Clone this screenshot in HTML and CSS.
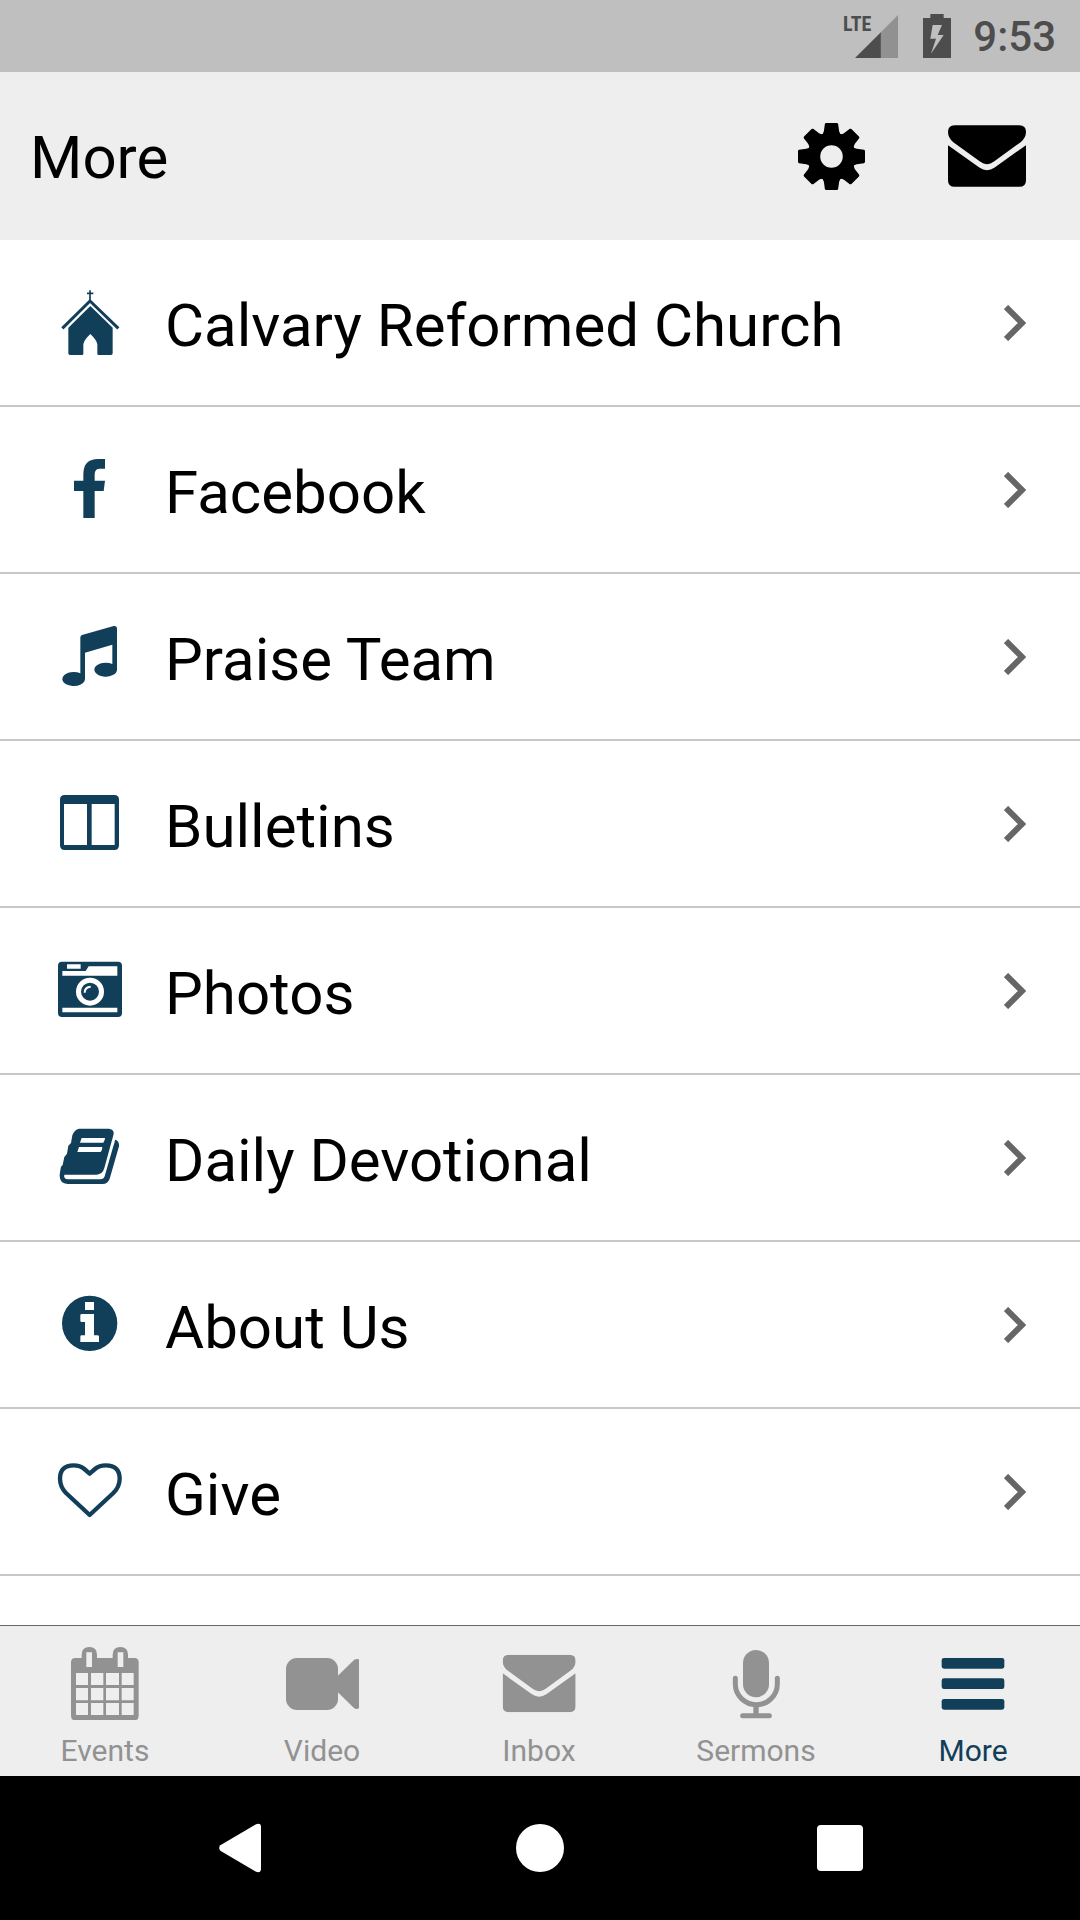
FILE: index.html
```html
<!DOCTYPE html>
<html lang="en">
<head>
<meta charset="utf-8">
<meta name="viewport" content="width=device-width, initial-scale=1">
<title>More</title>
<link rel="stylesheet" href="styles.css">
</head>
<body>
<svg class="defs" aria-hidden="true">
  <symbol id="mail" viewBox="504 375 234 185">
    <path d="M524 375H718Q738 375 738 395Q738 414 722 426L642 484Q621 500 600 484L520 426Q504 414 504 395Q504 375 524 375Z"/>
    <path d="M504 435L598 502Q621 518 644 502L738 435V540Q738 560 718 560H524Q504 560 504 540Z"/>
  </symbol>
  <symbol id="chevron" viewBox="0 0 22 36">
    <path d="M2 2L18 18L2 34" fill="none" stroke="currentColor" stroke-width="6"/>
  </symbol>
  <path id="tooth" d="M-34 -62Q-24 -68 -23 -76L-20 -98Q-19 -101 -16 -101H16Q19 -101 20 -98L23 -76Q24 -68 34 -62Z"/>
</svg>

<div class="status">
  <span class="lte">LTE</span>
  <svg class="signal" viewBox="226 43 128 128" aria-hidden="true"><path class="signal-off" d="M354 43V171H303V94Z"/><path d="M303 94V171H226Z"/></svg>
  <svg class="battery" viewBox="429 42 84 132" aria-hidden="true"><path fill-rule="evenodd" d="M451 42H491V54H513V174H429V54H451ZM458 75L451 116H468L453 161L491 105H473L486 75Z"/></svg>
  <time class="clock">9:53</time>
</div>

<header class="header">
  <h1 class="title">More</h1>
  <button class="action" type="button" aria-label="Settings">
    <svg class="gear" viewBox="-101 -101 202 202" aria-hidden="true">
      <circle r="53" fill="none" stroke="currentColor" stroke-width="38"/>
      <use href="#tooth" class="t0"/><use href="#tooth" transform="rotate(45)"/><use href="#tooth" transform="rotate(90)"/><use href="#tooth" transform="rotate(135)"/><use href="#tooth" transform="rotate(180)"/><use href="#tooth" transform="rotate(225)"/><use href="#tooth" transform="rotate(270)"/><use href="#tooth" transform="rotate(315)"/>
    </svg>
  </button>
  <button class="action" type="button" aria-label="Messages"><svg class="envelope" aria-hidden="true"><use href="#mail"/></svg></button>
</header>

<main class="content">
  <ul class="menu">
    <li><a class="row" href="#church">
      <svg class="icon" viewBox="165 120 210 255" aria-hidden="true">
        <path d="M270 151V182M261 160H280" fill="none" stroke="currentColor" stroke-width="5"/>
        <path d="M187 265L270 183L355 265" fill="none" stroke="currentColor" stroke-width="9"/>
        <path d="M271 198L338 263V340Q338 345 333 345H296Q292 345 292 341V313Q290 300 271 282Q252 300 250 313V341Q250 345 246 345H210Q205 345 205 340V263Z"/>
      </svg>
      <span class="label">Calvary Reformed Church</span><svg class="chevron" aria-hidden="true"><use href="#chevron"/></svg></a></li>
    <li><a class="row" href="#facebook">
      <svg class="icon" viewBox="165 621 210 255" aria-hidden="true">
        <path d="M250 834V753H222V722H250V702Q250 657 295 657H315V686H299Q284 686 284 703V722H315L311 753H284V834Z"/>
      </svg>
      <span class="label">Facebook</span><svg class="chevron" aria-hidden="true"><use href="#chevron"/></svg></a></li>
    <li><a class="row" href="#praise">
      <svg class="icon" viewBox="165 132 210 255" aria-hidden="true">
        <path d="M241 202Q241 197 246 195L341 168Q351 167 351 176V299A34 21 0 1 1 337 282V224L255 248V327A34 21 0 1 1 241 310Z"/>
      </svg>
      <span class="label">Praise Team</span><svg class="chevron" aria-hidden="true"><use href="#chevron"/></svg></a></li>
    <li><a class="row" href="#bulletins">
      <svg class="icon" viewBox="165 633 210 255" aria-hidden="true">
        <path fill-rule="evenodd" d="M194 675H343Q357 675 357 689V826Q357 840 343 840H194Q180 840 180 826V689Q180 675 194 675ZM192 702V825H261V702ZM275 702V825H344V702Z"/>
      </svg>
      <span class="label">Bulletins</span><svg class="chevron" aria-hidden="true"><use href="#chevron"/></svg></a></li>
    <li><a class="row" href="#photos">
      <svg class="icon" viewBox="165 144 210 255" aria-hidden="true">
        <path fill-rule="evenodd" d="M186 185H354Q366 185 366 197V339Q366 351 354 351H186Q174 351 174 339V197Q174 185 186 185ZM201 193V206H242V193ZM266 199L257 213H187V227H352V199ZM187 323V337H352V323ZM270 233A42 42 0 1 0 270 317A42 42 0 1 0 270 233ZM270 248A27 27 0 1 1 270 302A27 27 0 1 1 270 248Z"/>
        <path d="M254 278Q254 261 272 260" fill="none" stroke="#fff" stroke-width="6"/>
      </svg>
      <span class="label">Photos</span><svg class="chevron" aria-hidden="true"><use href="#chevron"/></svg></a></li>
    <li><a class="row" href="#devotional">
      <svg class="icon" viewBox="165 645 210 255" aria-hidden="true">
        <path fill-rule="evenodd" d="M237 686H327Q345 688 340 706L313 804Q308 823 290 824H193Q190 837 204 838H301Q311 838 314 829L341 735Q344 728 345 719Q358 721 357 739L329 836Q323 852 308 852H203Q179 850 179 827Q179 820 183 800L188 795L193 771L201 761L205 737L213 729L217 706Q224 688 237 686ZM245 714L240 728H310Q315 722 315 714ZM237 741L232 756H302Q307 750 307 741Z"/>
      </svg>
      <span class="label">Daily Devotional</span><svg class="chevron" aria-hidden="true"><use href="#chevron"/></svg></a></li>
    <li><a class="row" href="#about">
      <svg class="icon" viewBox="165 126 210 255" aria-hidden="true">
        <path fill-rule="evenodd" d="M269 167A83 83 0 1 0 269 333A83 83 0 1 0 269 167ZM255 186H282V210H255ZM245 222H282V286H292Q297 286 297 290V306H241V290Q241 286 245 286H255V246H245Q241 246 241 242V226Q241 222 245 222Z"/>
      </svg>
      <span class="label">About Us</span><svg class="chevron" aria-hidden="true"><use href="#chevron"/></svg></a></li>
    <li><a class="row" href="#give">
      <svg class="icon" viewBox="165 627 210 255" aria-hidden="true">
        <path d="M269 825L198 759Q180 740 180 716Q180 676 221 676Q240 676 253 687L269 701L285 687Q298 676 317 676Q359 676 359 716Q359 740 340 759Z" fill="none" stroke="currentColor" stroke-width="13" stroke-linejoin="round"/>
      </svg>
      <span class="label">Give</span><svg class="chevron" aria-hidden="true"><use href="#chevron"/></svg></a></li>
  </ul>
</main>

<nav class="tabs">
  <a class="tab" href="#events">
    <svg class="tab-icon" viewBox="195 90 240 240" aria-hidden="true">
      <path fill-rule="evenodd" d="M226 144H245V134Q245 111 268 111Q291 111 291 134V144H338V134Q338 111 361 111Q384 111 384 134V144H403Q416 144 416 157V317Q416 331 403 331H226Q213 331 213 317V157Q213 144 226 144ZM259 127V171H276V127ZM353 127V171H370V127ZM228 189V225H264V189ZM273 189V225H310V189ZM318 189V225H357V189ZM365 189V225H401V189ZM228 234V271H264V234ZM273 234V271H310V234ZM318 234V271H357V234ZM365 234V271H401V234ZM228 279V315H264V279ZM273 279V315H310V279ZM318 279V315H357V279ZM365 279V315H401V279Z"/>
    </svg>Events</a>
  <a class="tab" href="#video">
    <svg class="tab-icon" viewBox="846 90 240 240" aria-hidden="true">
      <rect x="858" y="144" width="156" height="156" rx="33"/>
      <path d="M1012 199L1062 150Q1068 145 1077 148V295Q1068 299 1062 294L1012 245Z"/>
    </svg>Video</a>
  <a class="tab" href="#inbox">
    <svg class="tab-icon" viewBox="148 90 240 240" aria-hidden="true"><use href="#mail" x="159" y="134" width="219" height="173"/></svg>Inbox</a>
  <a class="tab" href="#sermons">
    <svg class="tab-icon" viewBox="798 90 240 240" aria-hidden="true">
      <rect x="879" y="120" width="78" height="142" rx="39"/>
      <path d="M856 205V222A63 62 0 0 0 982 222V205M878 317H958" fill="none" stroke="currentColor" stroke-width="15" stroke-linecap="round"/>
      <path d="M918 284V317" stroke="currentColor" stroke-width="16"/>
    </svg>Sermons</a>
  <a class="tab tab-active" href="#more" aria-current="page">
    <svg class="tab-icon" viewBox="460 210 240 240" aria-hidden="true">
      <rect x="486" y="264" width="188" height="32" rx="7"/><rect x="486" y="325" width="188" height="32" rx="7"/><rect x="486" y="387" width="188" height="32" rx="7"/>
    </svg>More</a>
</nav>

<div class="system">
  <button class="key" type="button" aria-label="Back"><svg class="key-icon" viewBox="90 114 180 180" aria-hidden="true"><path d="M228 133Q243 128 243 141V267Q243 280 228 275L121 212Q114 204 121 196Z"/></svg></button>
  <button class="key" type="button" aria-label="Home"><svg class="key-icon" viewBox="0 0 60 60" aria-hidden="true"><circle cx="30" cy="30" r="24"/></svg></button>
  <button class="key" type="button" aria-label="Recent apps"><svg class="key-icon" viewBox="0 0 60 60" aria-hidden="true"><rect x="7" y="7" width="46" height="46" rx="4"/></svg></button>
</div>
</body>
</html>
```
FILE: styles.css
```css
* {
  box-sizing: border-box;
}

body {
  display: flex;
  flex-direction: column;
  min-height: 100vh;
  margin: 0;
  background: #fff;
  color: #000;
  font-family: Roboto, "Liberation Sans", sans-serif;
}

svg {
  display: block;
  flex: none;
  fill: currentColor;
}

a {
  color: inherit;
  text-decoration: none;
}

button {
  padding: 0;
  border: 0;
  background: none;
  color: inherit;
}

.defs {
  position: absolute;
  width: 0;
  height: 0;
}

/* Status bar */
.status {
  display: flex;
  align-items: center;
  justify-content: flex-end;
  height: 72px;
  padding-right: 24px;
  background: #bfbfbf;
  color: #4d4d4d;
}

.lte {
  align-self: flex-start;
  margin: 12px -16px 0 0;
  font-family: "Roboto Condensed", "Liberation Sans Narrow", Roboto, sans-serif;
  font-size: 20px;
  font-weight: 700;
  line-height: 24px;
}

.signal {
  width: 43px;
  height: 43px;
}

.signal-off {
  fill: #919191;
}

.battery {
  width: 28px;
  height: 44px;
  margin: 0 22px 0 25px;
}

.clock {
  padding-top: 2px;
  font-size: 42px;
  font-weight: 500;
  line-height: 48px;
}

/* Header */
.header {
  display: flex;
  align-items: center;
  gap: 83px;
  height: 168px;
  padding: 0 54px 0 30px;
  background: #eee;
}

.title {
  flex: 1;
  margin: 0;
  padding-top: 4px;
  font-size: 60px;
  font-weight: 400;
  line-height: 70px;
}

.gear {
  width: 67px;
  height: 67px;
}

.envelope {
  width: 78px;
  height: 62px;
}

/* Menu */
.content {
  flex: 1;
  padding-bottom: 49px;
}

.menu {
  margin: 0;
  padding: 0;
  list-style: none;
}

.row {
  display: flex;
  align-items: center;
  min-height: 167px;
  padding: 0 54px 0 55px;
  border-bottom: 2px solid #c8c8c8;
}

.icon {
  width: 70px;
  height: 85px;
  color: #113f59;
}

.label {
  flex: 1;
  padding: 6px 0 0 40px;
  font-size: 60px;
  line-height: 70px;
}

.chevron {
  width: 22px;
  height: 36px;
  color: #666;
}

/* Tab bar */
.tabs {
  display: flex;
  justify-content: space-between;
  padding: 14px 18px 7px 16px;
  border-top: 1px solid #666;
  background: #eee;
  color: #929292;
}

.tab {
  display: flex;
  flex: 0 1 178px;
  flex-direction: column;
  align-items: center;
  gap: 13px;
  font-size: 30px;
  line-height: 36px;
}

.tab-active {
  color: #113f59;
}

.tab-icon {
  width: 80px;
  height: 80px;
}

/* System keys */
.system {
  display: grid;
  grid-template-columns: repeat(3, 1fr);
  height: 144px;
  padding: 0 90px;
  background: #000;
  color: #fff;
}

.key {
  display: flex;
  align-items: center;
  justify-content: center;
}

.key-icon {
  width: 60px;
  height: 60px;
}
```
